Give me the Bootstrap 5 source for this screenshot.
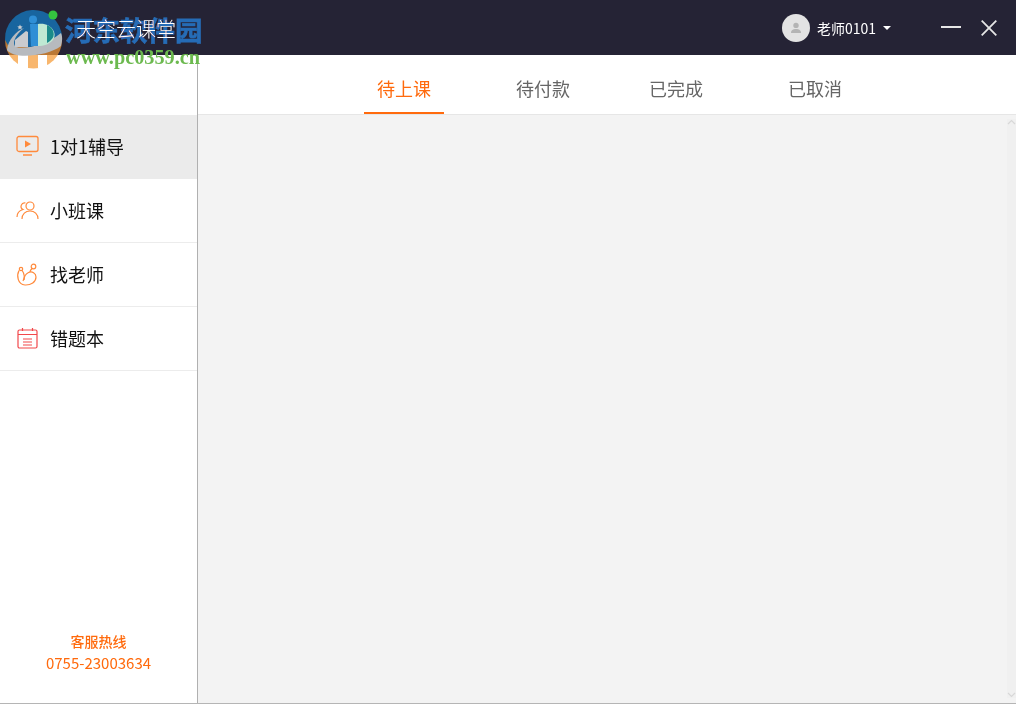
<!DOCTYPE html>
<html lang="zh-CN">
<head>
    <meta charset="UTF-8">
    <title>天空云课堂</title>
    <link href="https://cdn.jsdelivr.net/npm/bootstrap@5.3.3/dist/css/bootstrap.min.css" rel="stylesheet">
    <style>
        html, body { height: 100%; }
        body { font-family: "Noto Sans CJK SC", sans-serif; background: #fff; overflow: hidden; }
        .app-shell { height: 704px; border-bottom: 1px solid #b5b5b5; }
        .title-bar { height: 55px; background: #252335; color: #fff; padding-left: 76px; }
        .app-name { font-size: 20px; font-weight: 300; padding-top: 2px; }
        .avatar { width: 28px; height: 28px; background: #e3e3e3; }
        .user-name { font-size: 14px; margin-left: 7px; padding-top: 2px; }
        .caret { width: 0; height: 0; border: 4px solid transparent; border-top-color: #fff; border-bottom: 0; margin-left: 7px; }
        .user-box { margin-right: 50px; }
        .win-btns { gap: 20px; margin-right: 19px; }
        .side { width: 198px; border-right: 1px solid #b0b0b0; padding-top: 60px; }
        .side-item { height: 64px; padding-left: 16px; font-size: 18px; color: #111; border-bottom: 1px solid #ececec; gap: 12px; }
        .side-item.current { background: #ebebeb; border-bottom-color: #ebebeb; }
        .side-ico { width: 23px; height: 23px; margin-right: -1px; }
        .hotline { color: #ff6a0d; padding-bottom: 29px; line-height: 22px; }
        .hotline-label { font-size: 14px; font-weight: 500; }
        .hotline-num { font-size: 15px; }
        .tabs-row { height: 60px; border-bottom: 1px solid #e6e6e6; padding-left: 166px; gap: 59px; }
        .tab-item { width: 80px; font-size: 18px; color: #666; padding-top: 20px; }
        .tab-item.current { color: #ff6a0d; border-bottom: 2px solid #ff6a0d; height: 59px; }
        .tab-item.nudged { margin-left: -6px; }
        .pane { background: #f3f3f3; position: relative; }
        .scroll-track { width: 9px; background: #f0f0f0; margin-top: 4px; margin-bottom: 5px; }
        .scroll-arrow { width: 9px; height: 6px; display: block; }
        .wm { position: absolute; left: 0; top: 0; width: 210px; height: 72px; pointer-events: none; }
        .wm-logo { position: absolute; left: 0; top: 0; width: 70px; height: 72px; }
        .wm-cn { position: absolute; left: 65px; top: 9px; font-size: 27.5px; line-height: 40px; font-weight: 700; color: #0f6cb6; -webkit-text-stroke: .6px #0f6cb6; white-space: nowrap; mix-blend-mode: lighten; }
        .wm-url { position: absolute; left: 66px; top: 46px; font-family: "Liberation Serif", serif; font-size: 20.3px; line-height: 22px; font-weight: 700; color: #6cb94f; white-space: nowrap; }
    </style>
</head>
<body>
<div class="app-shell d-flex flex-column position-relative">
    <div class="title-bar d-flex align-items-center justify-content-between flex-shrink-0">
        <span class="app-name">天空云课堂</span>
        <div class="d-flex align-items-center">
            <div class="user-box d-flex align-items-center">
                <span class="avatar rounded-circle d-flex align-items-center justify-content-center">
                    <svg width="12" height="12" viewBox="0 0 12 12"><circle cx="6" cy="3.4" r="2.7" fill="#b4b4b4"/><path d="M1 11c0-3 2-4 5-4s5 1 5 4z" fill="#b4b4b4"/></svg>
                </span>
                <span class="user-name">老师0101</span>
                <span class="caret"></span>
            </div>
            <div class="win-btns d-flex align-items-center">
                <svg width="20" height="16" viewBox="0 0 20 16"><path d="M0 7h20" stroke="#e6e6e6" stroke-width="2"/></svg>
                <svg width="16" height="16" viewBox="0 0 16 16"><path d="M.7.7l14.600 14.600M15.300.7L.7 15.300" stroke="#e6e6e6" stroke-width="1.800" fill="none"/></svg>
            </div>
        </div>
    </div>
    <div class="d-flex flex-grow-1" style="min-height:0">
        <div class="side d-flex flex-column flex-shrink-0">
            <div class="side-item current d-flex align-items-center">
                <svg class="side-ico" viewBox="0 0 23 23" fill="none" stroke="#ff8a3c" stroke-width="1.300"><rect x="1" y="1.500" width="21" height="15" rx="2"/><path d="M9 5.500l6 3.500-6 3.500z" fill="#ff8a3c" stroke="none"/><path d="M7 20h9" stroke-width="1.500"/></svg>
                <span>1对1辅导</span>
            </div>
            <div class="side-item d-flex align-items-center">
                <svg class="side-ico" viewBox="0 0 23 23" fill="none" stroke="#ff8a3c" stroke-width="1.200"><circle cx="14" cy="7" r="4"/><path d="M6 20c0-5 3.500-8 8-8s8 3 8 8"/><path d="M9.500 4a3.500 3.500 0 0 0-2.500 6.500C3.500 11.500 1 14.500 1 18"/></svg>
                <span>小班课</span>
            </div>
            <div class="side-item d-flex align-items-center">
                <svg class="side-ico" viewBox="0 0 23 23" fill="none" stroke="#ff8a3c" stroke-width="1.200"><circle cx="17.500" cy="3.500" r="2.300"/><circle cx="5" cy="6" r="1.700"/><path d="M16 5.500c-1 1-2 2-2 3.500"/><path d="M3 7.500c-2.500 5-1.500 14 6 14.500 6 .3 11-3 11-8 0-4-4-6-7.500-4.500C9.500 11 8 14 8 17"/><path d="M6.200 7.500c2 3 2.800 7 .8 10.500"/></svg>
                <span>找老师</span>
            </div>
            <div class="side-item d-flex align-items-center">
                <svg class="side-ico" viewBox="0 0 23 23" fill="none" stroke="#f2484b" stroke-width="1.200"><rect x="2" y="3" width="19" height="18" rx="1.500"/><path d="M2 7.500h19M6.500 1v3M16.500 1v3M7 12h9M7 15h9M7 18h9"/></svg>
                <span>错题本</span>
            </div>
            <div class="hotline mt-auto text-center">
                <div class="hotline-label">客服热线</div>
                <div class="hotline-num">0755-23003634</div>
            </div>
        </div>
        <div class="d-flex flex-column flex-grow-1">
            <div class="tabs-row d-flex flex-shrink-0">
                <div class="tab-item current text-center">待上课</div>
                <div class="tab-item text-center">待付款</div>
                <div class="tab-item nudged text-center">已完成</div>
                <div class="tab-item text-center">已取消</div>
            </div>
            <div class="pane flex-grow-1 d-flex justify-content-end">
                <div class="scroll-track d-flex flex-column justify-content-between">
                    <svg class="scroll-arrow" viewBox="0 0 9 6"><path d="M1 5l3.500-3.500L8 5" fill="none" stroke="#d8d8d8" stroke-width="1.200"/></svg>
                    <svg class="scroll-arrow" viewBox="0 0 9 6"><path d="M1 1l3.500 3.500L8 1" fill="none" stroke="#d8d8d8" stroke-width="1.200"/></svg>
                </div>
            </div>
        </div>
    </div>
    <div class="wm">
        <svg class="wm-logo" viewBox="0 0 70 72">
            <!-- orange lower half, see-through so it darkens over the title bar -->
            <path d="M5 40a28 28 0 0 0 57 0z" fill="#f59a35" opacity=".72"/>
            <!-- white gaps under the header -->
            <rect x="18" y="55" width="10" height="13" fill="#fff"/>
            <rect x="38" y="55" width="9" height="13" fill="#fff"/>
            <!-- blue cap -->
            <path d="M5 40a28.500 28.500 0 0 1 57-3L40 47H9z" fill="#18659f"/>
            <!-- grey swoosh -->
            <path d="M7 50C8 40 16 31 24 28 14 36 12 44 16 47c8 3 30-2 45-14 2 5 1 9 0 13C48 56 14 60 7 50z" fill="#b7babe"/>
            <!-- house -->
            <path d="M15 47V40l11-9 2 1v15z" fill="#c9cbcf"/>
            <path d="M20 24.500l.8 1.700 1.900.2-1.400 1.300.4 1.900-1.700-1-1.700 1 .4-1.900-1.400-1.300 1.900-.2z" fill="#c9ccd0"/>
            <!-- person -->
            <circle cx="33" cy="19.500" r="4" fill="#2f8fd6"/>
            <path d="M30 24h8v22h-7z" fill="#2f8fd6"/>
            <!-- leaf -->
            <path d="M38 24c13-2 21 10 14 17-3 3-8 5-14 5z" fill="#bfe9d3"/>
            <path d="M47 25c7 3 9 11 4 15-2 2-3 2-4 3z" fill="#1b8b8a"/>
            <circle cx="53" cy="15" r="4.500" fill="#35c53f"/>
        </svg>
        <div class="wm-cn">河东软件园</div>
        <div class="wm-url">www.pc0359.cn</div>
    </div>
</div>
</body>
</html>
